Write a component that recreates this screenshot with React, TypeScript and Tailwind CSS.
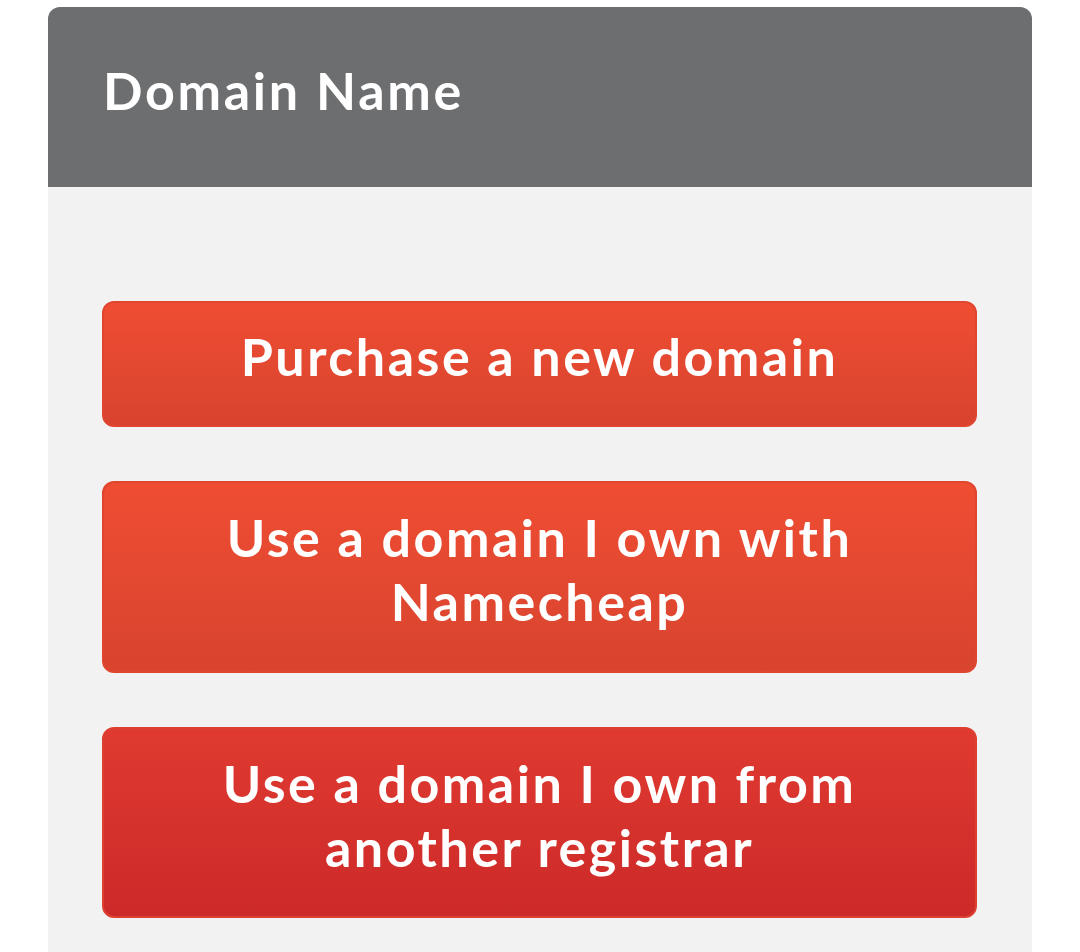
const options = [
  { lines: ['Purchase a new domain'], tone: 'bg-gradient-to-b from-[#ef4d32] to-[#d8442f] border-[#e0452f]', h: 'h-[126px]' },
  { lines: ['Use a domain I own with', 'Namecheap'], tone: 'bg-gradient-to-b from-[#ef4d32] to-[#d8442f] border-[#e0452f]', h: 'h-[192px]' },
  { lines: ['Use a domain I own from', 'another registrar'], tone: 'bg-gradient-to-b from-[#e03a30] to-[#cc2929] border-[#dd4030]', h: 'h-[191px]' },
];

export default function App() {
  return (
    <div className="min-h-[952px] bg-white pt-[7px] pl-[48px] font-['Lato',sans-serif]">
      <div className="w-[984px] min-h-[945px] bg-[#f2f2f2] rounded-t-[12px] overflow-hidden">
        <div className="h-[180px] bg-[#6d6e70] flex items-center pl-[55px] pb-[14px]">
          <h1 className="text-white text-[52px] font-bold tracking-[2.7px] leading-none">Domain Name</h1>
        </div>
        <div className="flex flex-col gap-[54px] pt-[114px] pl-[54px] pr-[55px]">
          {options.map((o, i) => (
            <button
              key={i}
              className={`${o.tone} ${o.h} w-full rounded-[12px] border-2 flex flex-col items-center justify-center pb-[16px] text-white text-[52px] font-bold tracking-[2.5px] leading-[64px]`}
            >
              {o.lines.map((l) => (
                <span key={l} className="whitespace-nowrap">{l}</span>
              ))}
            </button>
          ))}
        </div>
      </div>
    </div>
  );
}
